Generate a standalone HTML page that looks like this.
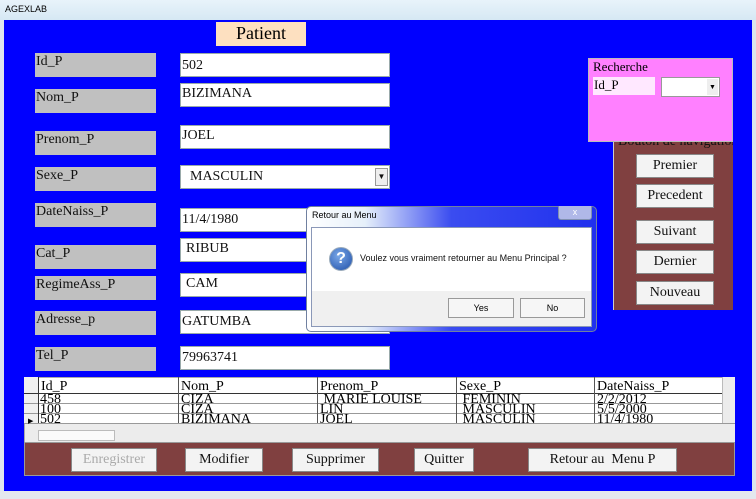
<!DOCTYPE html><html><head><style>
*{margin:0;padding:0;box-sizing:border-box}
body{width:756px;height:499px;overflow:hidden;background:#dce6ee;font-family:"Liberation Serif",serif;position:relative}
.a{position:absolute}
.lbl{position:absolute;left:35px;width:121px;height:24px;background:#c0c0c0;font-size:14px;line-height:14px;padding:2px 0 0 1px;color:#111}
.inp{position:absolute;left:180px;width:210px;height:24px;background:#fff;border:1px solid #9aa;font-size:14px;padding:2px 0 0 1px;color:#111}
.btn{position:absolute;background:#f3f3f3;border:1px solid #888;font-size:14px;text-align:center;line-height:22px;color:#111}
.g{position:absolute;font-size:14px;line-height:11px;overflow:hidden;white-space:nowrap}
.sans{font-family:"Liberation Sans",sans-serif}
</style></head><body>
<div class="a" style="left:0;top:0;width:756px;height:20px;background:linear-gradient(#e8f3fa,#d6e8f4)"></div>
<div class="a sans" style="left:5px;top:4px;font-size:9px;color:#000">AGEXLAB</div>
<div class="a" style="left:4px;top:20px;width:748px;height:471px;background:#0000ff"></div>
<div class="a" style="left:0;top:491px;width:756px;height:8px;background:#e4e8ee"></div>
<div class="a" style="left:216px;top:22px;width:90px;height:24px;background:#fde0c0;font-size:18px;text-align:center;line-height:22px">Patient</div>

<div class="lbl" style="top:53px">Id_P</div>
<div class="lbl" style="top:89px">Nom_P</div>
<div class="lbl" style="top:131px">Prenom_P</div>
<div class="lbl" style="top:167px">Sexe_P</div>
<div class="lbl" style="top:203px">DateNaiss_P</div>
<div class="lbl" style="top:245px">Cat_P</div>
<div class="lbl" style="top:276px">RegimeAss_P</div>
<div class="lbl" style="top:311px">Adresse_p</div>
<div class="lbl" style="top:347px">Tel_P</div>

<div class="inp" style="top:53px;padding-top:4px">502</div>
<div class="inp" style="top:83px">BIZIMANA</div>
<div class="inp" style="top:125px">JOEL</div>
<div class="inp" style="top:165px;padding-left:9px;padding-top:3px">MASCULIN<span class="a" style="right:1px;top:2px;width:13px;height:18px;background:#eee;border:1px solid #999;font-size:8px;line-height:16px;text-align:center">▼</span></div>
<div class="inp" style="top:208px;padding-top:3px">11/4/1980</div>
<div class="inp" style="top:238px;padding-left:5px">RIBUB</div>
<div class="inp" style="top:273px;padding-left:5px">CAM</div>
<div class="inp" style="top:310px;padding-top:3px">GATUMBA</div>
<div class="inp" style="top:346px;padding-top:3px">79963741</div>

<div class="a" style="left:613px;top:142px;width:120px;height:168px;background:#804040;border-left:1px solid #ccc"></div>
<div class="a" style="left:618px;top:135px;font-size:14px;color:#111;width:115px;overflow:hidden;white-space:nowrap;height:14px;line-height:14px">Bouton de navigation</div>
<div class="a" style="left:588px;top:58px;width:145px;height:84px;background:#ff80ff;border:1px solid #bbb"></div>
<div class="a" style="left:593px;top:59px;font-size:13px;background:#ff80ff">Recherche</div>
<div class="a" style="left:593px;top:77px;width:62px;height:18px;background:#ffe8ff;font-size:13px;padding-left:1px">Id_P</div>
<div class="a" style="left:661px;top:77px;width:59px;height:20px;background:#fff;border:1px solid #999"><span class="a" style="right:1px;top:1px;width:11px;height:16px;background:#eee;font-size:7px;line-height:16px;text-align:center">▼</span></div>
<div class="btn" style="left:636px;top:154px;width:78px;height:24px">Premier</div>
<div class="btn" style="left:636px;top:184px;width:78px;height:24px">Precedent</div>
<div class="btn" style="left:636px;top:220px;width:78px;height:24px">Suivant</div>
<div class="btn" style="left:636px;top:250px;width:78px;height:24px">Dernier</div>
<div class="btn" style="left:636px;top:281px;width:78px;height:24px">Nouveau</div>

<div class="a" style="left:24px;top:377px;width:711px;height:65px;background:#fff;border:1px solid #aaa"></div>
<div class="a" style="left:24px;top:377px;width:14px;height:46px;background:#f0f0f0"></div>
<div class="a" style="left:24px;top:393px;width:698px;height:1px;background:#333"></div>
<div class="a" style="left:24px;top:403px;width:698px;height:1px;background:#999"></div>
<div class="a" style="left:24px;top:413px;width:698px;height:1px;background:#999"></div>
<div class="a" style="left:24px;top:423px;width:711px;height:1px;background:#999"></div>
<div class="a" style="left:38px;top:377px;width:1px;height:46px;background:#333"></div>
<div class="a" style="left:178px;top:377px;width:1px;height:46px;background:#555"></div>
<div class="a" style="left:317px;top:377px;width:1px;height:46px;background:#555"></div>
<div class="a" style="left:456px;top:377px;width:1px;height:46px;background:#555"></div>
<div class="a" style="left:594px;top:377px;width:1px;height:46px;background:#555"></div>
<div class="a" style="left:722px;top:377px;width:13px;height:46px;background:#ececec;border-left:1px solid #bbb"></div>
<div class="g" style="left:41px;top:380px;height:13px;line-height:13px">Id_P</div>
<div class="g" style="left:181px;top:380px;height:13px;line-height:13px">Nom_P</div>
<div class="g" style="left:320px;top:380px;height:13px;line-height:13px">Prenom_P</div>
<div class="g" style="left:459px;top:380px;height:13px;line-height:13px">Sexe_P</div>
<div class="g" style="left:597px;top:380px;height:13px;line-height:13px">DateNaiss_P</div>
<div class="g" style="left:40px;top:394px;height:9px">458</div><div class="g" style="left:181px;top:394px;height:9px">CIZA</div><div class="g" style="left:320px;top:394px;height:9px">&nbsp;MARIE LOUISE</div><div class="g" style="left:459px;top:394px;height:9px">&nbsp;FEMININ</div><div class="g" style="left:597px;top:394px;height:9px">2/2/2012</div>
<div class="g" style="left:40px;top:404px;height:9px">100</div><div class="g" style="left:181px;top:404px;height:9px">CIZA</div><div class="g" style="left:320px;top:404px;height:9px">LIN</div><div class="g" style="left:459px;top:404px;height:9px">&nbsp;MASCULIN</div><div class="g" style="left:597px;top:404px;height:9px">5/5/2000</div>
<div class="g" style="left:40px;top:414px;height:9px">502</div><div class="g" style="left:181px;top:414px;height:9px">BIZIMANA</div><div class="g" style="left:320px;top:414px;height:9px">JOEL</div><div class="g" style="left:459px;top:414px;height:9px">&nbsp;MASCULIN</div><div class="g" style="left:597px;top:414px;height:9px">11/4/1980</div>
<div class="a" style="left:28px;top:417px;font-size:7px">▶</div>
<div class="a" style="left:25px;top:424px;width:710px;height:18px;background:#ececec"></div>
<div class="a" style="left:38px;top:430px;width:77px;height:11px;background:#fafafa;border:1px solid #bbb"></div>

<div class="a" style="left:24px;top:442px;width:711px;height:34px;background:#804040;border:1px solid #999"></div>
<div class="btn" style="left:71px;top:448px;width:86px;height:24px;color:#aaa">Enregistrer</div>
<div class="btn" style="left:185px;top:448px;width:78px;height:24px">Modifier</div>
<div class="btn" style="left:292px;top:448px;width:87px;height:24px">Supprimer</div>
<div class="btn" style="left:414px;top:448px;width:60px;height:24px">Quitter</div>
<div class="btn" style="left:528px;top:448px;width:149px;height:24px">Retour au &nbsp;Menu P</div>

<div class="a" style="left:306px;top:206px;width:291px;height:126px;background:linear-gradient(90deg,#fff 0%,#e6f0fa 20%,#3a4cf0 50%,#2030ee 100%);border:1px solid #7080a0;border-radius:5px"></div>
<div class="a sans" style="left:312px;top:210px;font-size:9px;color:#000">Retour au Menu</div>
<div class="a sans" style="left:558px;top:206px;width:34px;height:14px;border:1px solid #8090b0;border-top:none;border-radius:0 0 3px 3px;background:#b0b8e8;color:#fff;font-size:9px;text-align:center;line-height:13px">x</div>
<div class="a" style="left:311px;top:227px;width:281px;height:100px;background:#f0f0f0;border:1px solid #8a98b8"></div>
<div class="a" style="left:312px;top:228px;width:279px;height:63px;background:#fff"></div>
<div class="a" style="left:329px;top:247px;width:24px;height:24px;border-radius:50%;background:radial-gradient(circle at 40% 35%,#7aa8e8,#1f4fa8);border:1px solid #9ab;color:#fff;font:bold 16px 'Liberation Sans',sans-serif;text-align:center;line-height:22px">?</div>
<div class="a sans" style="left:360px;top:253px;font-size:9px;color:#111">Voulez vous vraiment retourner au Menu Principal ?</div>
<div class="a sans" style="left:448px;top:298px;width:66px;height:20px;border:1px solid #999;background:#f6f6f6;font-size:9px;text-align:center;line-height:18px">Yes</div>
<div class="a sans" style="left:520px;top:298px;width:65px;height:20px;border:1px solid #999;background:#f6f6f6;font-size:9px;text-align:center;line-height:18px">No</div>
</body></html>
